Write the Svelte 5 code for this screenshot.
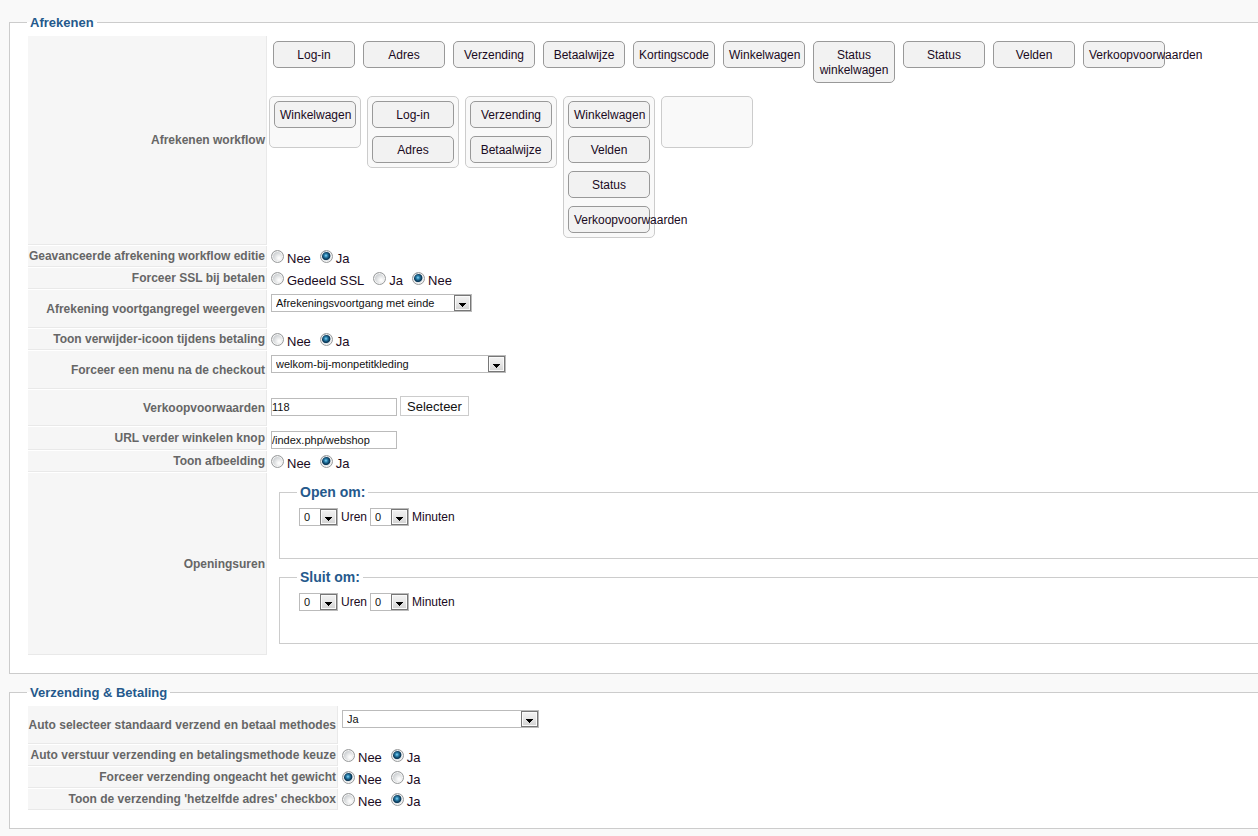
<script>
	const available = [
		'Log-in',
		'Adres',
		'Verzending',
		'Betaalwijze',
		'Kortingscode',
		'Winkelwagen',
		'Status winkelwagen',
		'Status',
		'Velden',
		'Verkoopvoorwaarden'
	];

	const steps = [
		['Winkelwagen'],
		['Log-in', 'Adres'],
		['Verzending', 'Betaalwijze'],
		['Winkelwagen', 'Velden', 'Status', 'Verkoopvoorwaarden'],
		[]
	];

	let form = $state({
		workflow_edit: 'Ja',
		force_ssl: 'Nee',
		checkout_bar: 'Afrekeningsvoortgang met einde',
		show_delete: 'Ja',
		menu: 'welkom-bij-monpetitkleding',
		terms: '118',
		continue_url: '/index.php/webshop',
		show_image: 'Ja',
		auto_select: 'Ja',
		auto_submit: 'Ja',
		force_shipping: 'Nee',
		same_address: 'Ja'
	});

	const hours = Array.from({ length: 24 }, (_, i) => i);
	const minutes = Array.from({ length: 60 }, (_, i) => i);
	const times = [
		{ id: 'open', title: 'Open om:' },
		{ id: 'close', title: 'Sluit om:' }
	];
</script>

{#snippet radios(name, title, options)}
	<div class="key" id="{name}-key">{title}</div>
	<div class="value choices" role="radiogroup" aria-labelledby="{name}-key">
		{#each options as option}
			<label><input type="radio" {name} value={option} bind:group={form[name]} />{option}</label>
		{/each}
	</div>
{/snippet}

{#snippet arrow()}
	<svg class="arrow" width="17" height="16" viewBox="0 0 17 16" aria-hidden="true">
		<rect x="0.5" y="0.5" width="16" height="15" fill="none" stroke="#777" />
		<rect x="1.5" y="1.5" width="14" height="13" fill="none" stroke="#fafafa" />
		<path d="M5 8h7v1h-1v1h-1v1h-1v1h-1v-1h-1v-1h-1v-1h-1z" fill="#000" />
	</svg>
{/snippet}

{#snippet dropdown(name, title, options, size)}
	<label class="key" for={name}>{title}</label>
	<div class="value">
		<span class="select {size}">
			<select id={name} bind:value={form[name]}>
				{#each options as option}
					<option>{option}</option>
				{/each}
			</select>
			{@render arrow()}
		</span>
	</div>
{/snippet}

<fieldset class="panel">
	<legend>Afrekenen</legend>
	<div class="form">
		<div class="key">Afrekenen workflow</div>
		<div class="workflow">
			<ul class="available">
				{#each available as item}
					<li class="item">{item}</li>
				{/each}
			</ul>
			<div class="steps">
				{#each steps as step}
					<ul class="step">
						{#each step as item}
							<li class="item">{item}</li>
						{/each}
					</ul>
				{/each}
			</div>
		</div>

		{@render radios('workflow_edit', 'Geavanceerde afrekening workflow editie', ['Nee', 'Ja'])}
		{@render radios('force_ssl', 'Forceer SSL bij betalen', ['Gedeeld SSL', 'Ja', 'Nee'])}
		{@render dropdown('checkout_bar', 'Afrekening voortgangregel weergeven', ['Afrekeningsvoortgang met einde'], 'medium')}
		{@render radios('show_delete', 'Toon verwijder-icoon tijdens betaling', ['Nee', 'Ja'])}
		{@render dropdown('menu', 'Forceer een menu na de checkout', ['welkom-bij-monpetitkleding'], 'large')}

		<label class="key" for="terms">Verkoopvoorwaarden</label>
		<div class="value terms">
			<input type="text" id="terms" bind:value={form.terms} />
			<button type="button">Selecteer</button>
		</div>

		<label class="key" for="continue_url">URL verder winkelen knop</label>
		<div class="value">
			<input type="text" id="continue_url" bind:value={form.continue_url} />
		</div>

		{@render radios('show_image', 'Toon afbeelding', ['Nee', 'Ja'])}

		<div class="key">Openingsuren</div>
		<div class="hours">
			{#each times as time}
				<fieldset>
					<legend>{time.title}</legend>
					<div class="time">
						<span class="select small">
							<select id="{time.id}-hour">
								{#each hours as h}
									<option>{h}</option>
								{/each}
							</select>
							{@render arrow()}
						</span>
						<label for="{time.id}-hour">Uren</label>
						<span class="select small">
							<select id="{time.id}-minute">
								{#each minutes as m}
									<option>{m}</option>
								{/each}
							</select>
							{@render arrow()}
						</span>
						<label for="{time.id}-minute">Minuten</label>
					</div>
				</fieldset>
			{/each}
		</div>
	</div>
</fieldset>

<fieldset class="panel">
	<legend>Verzending &amp; Betaling</legend>
	<div class="form wide">
		{@render dropdown('auto_select', 'Auto selecteer standaard verzend en betaal methodes', ['Ja', 'Nee'], 'medium')}
		{@render radios('auto_submit', 'Auto verstuur verzending en betalingsmethode keuze', ['Nee', 'Ja'])}
		{@render radios('force_shipping', 'Forceer verzending ongeacht het gewicht', ['Nee', 'Ja'])}
		{@render radios('same_address', "Toon de verzending 'hetzelfde adres' checkbox", ['Nee', 'Ja'])}
	</div>
</fieldset>

<style>
	:global(body) {
		background: #f9f9f9;
		color: #1a0a22;
		font-family: Arial, "Liberation Sans", sans-serif;
		font-size: 12px;
		overflow-x: hidden;
	}
	:global(#app) {
		padding-top: 14px;
	}
	fieldset {
		min-width: 0;
		border: 1px solid #ccc;
		background: #fff;
	}
	legend {
		color: #25598c;
		font-weight: bold;
		padding: 0 3px;
	}
	/* the panels run on past the right edge of the window */
	.panel {
		margin: 0 -20px 10px 9px;
		padding: 5px 17px 18px 18px;
	}
	.panel > legend {
		font-size: 13px;
		line-height: 17px;
		margin-left: -1px;
	}
	.form {
		display: grid;
		grid-template-columns: 239px 1fr;
		gap: 1px;
	}
	.form.wide {
		grid-template-columns: 310px 1fr;
	}
	.key {
		box-sizing: border-box;
		display: flex;
		align-items: center;
		justify-content: flex-end;
		padding-right: 1px;
		background: #f6f6f6;
		border-right: 1px solid #e9e9e9;
		border-bottom: 1px solid #e9e9e9;
		color: #666;
		font-weight: bold;
		line-height: 20px;
		white-space: nowrap;
	}
	.value {
		padding: 4px 3px 1px;
		font-size: 13px;
	}
	.choices {
		display: flex;
		gap: 9px;
		padding: 4px 3px 0;
		line-height: 17px;
	}
	.choices label {
		display: flex;
		align-items: flex-start;
		gap: 3px;
	}
	input[type="radio"] {
		appearance: none;
		box-sizing: border-box;
		width: 13px;
		height: 13px;
		margin: 0;
		border: 1px solid #999b9c;
		border-radius: 50%;
		background: radial-gradient(circle at 65% 65%, #fbfbfb 10%, #c4c8cb 75%);
		box-shadow: inset 0 0 0 1px #f4f4f4;
	}
	input[type="radio"]:checked {
		background: radial-gradient(circle at 45% 42%, #8fd6f5 0, #2c86b3 18%, #0d3c5c 40%, #0d3c5c 46%, #dfe3e6 56%);
	}

	ul {
		list-style: none;
		margin: 0;
		padding: 0;
	}
	.workflow {
		padding: 5px 1px 7px;
	}
	.available {
		display: flex;
		align-items: flex-start;
		gap: 8px;
		padding: 0 4px;
	}
	.steps {
		display: flex;
		align-items: flex-start;
		gap: 6px;
		margin-top: 13px;
	}
	.step {
		box-sizing: border-box;
		display: flex;
		flex-direction: column;
		gap: 8px;
		width: 92px;
		min-height: 52px;
		padding: 4px;
		border: 1px solid #ccc;
		border-radius: 5px;
		background: #f9f9f9;
	}
	.item {
		box-sizing: border-box;
		flex-shrink: 0;
		width: 82px;
		padding: 6px 5px 4px;
		border: 1px solid #999;
		border-radius: 5px;
		background: #f2f2f2;
		line-height: 15px;
		text-align: center;
		cursor: move;
	}

	.select {
		display: inline-grid;
		vertical-align: top;
		height: 18px;
	}
	.select > :global(*) {
		grid-area: 1 / 1;
	}
	.value .select {
		margin-bottom: 15px;
	}
	.medium {
		width: 201px;
	}
	.wide .medium {
		width: 197px;
	}
	.large {
		width: 235px;
	}
	.small {
		width: 39px;
	}
	select {
		appearance: none;
		box-sizing: border-box;
		width: 100%;
		height: 18px;
		margin: 0;
		padding: 0 18px 0 4px;
		border: 1px solid #bbb;
		border-radius: 0;
		background: #fff;
		color: #111;
		font: 11px Arial, "Liberation Sans", sans-serif;
	}
	.arrow {
		justify-self: end;
		align-self: center;
		margin-right: 1px;
		background: linear-gradient(#f4f4f4, #e6e6e6 50%, #cfcfcf);
		pointer-events: none;
	}
	input[type="text"] {
		display: block;
		box-sizing: border-box;
		width: 126px;
		height: 18px;
		padding: 0;
		border: 1px solid #bbb;
		background: #fff;
		color: #111;
		font: 11px Arial, "Liberation Sans", sans-serif;
	}
	.terms {
		display: flex;
		align-items: flex-end;
		gap: 3px;
		padding: 6px 3px 10px;
	}
	button {
		height: 20px;
		padding: 0 6px;
		border: 1px solid #ccc;
		background: #fff;
		color: #111;
		font: 13px Arial, "Liberation Sans", sans-serif;
	}

	.hours {
		padding: 10px 0 11px 11px;
	}
	.hours fieldset {
		margin: 0;
		padding: 7px 17px 32px 19px;
	}
	.hours fieldset + fieldset {
		margin-top: 9px;
	}
	.hours legend {
		margin-left: -2px;
		font-size: 14px;
		line-height: 18px;
	}
	.time {
		display: flex;
		align-items: center;
		gap: 3px;
	}
</style>
